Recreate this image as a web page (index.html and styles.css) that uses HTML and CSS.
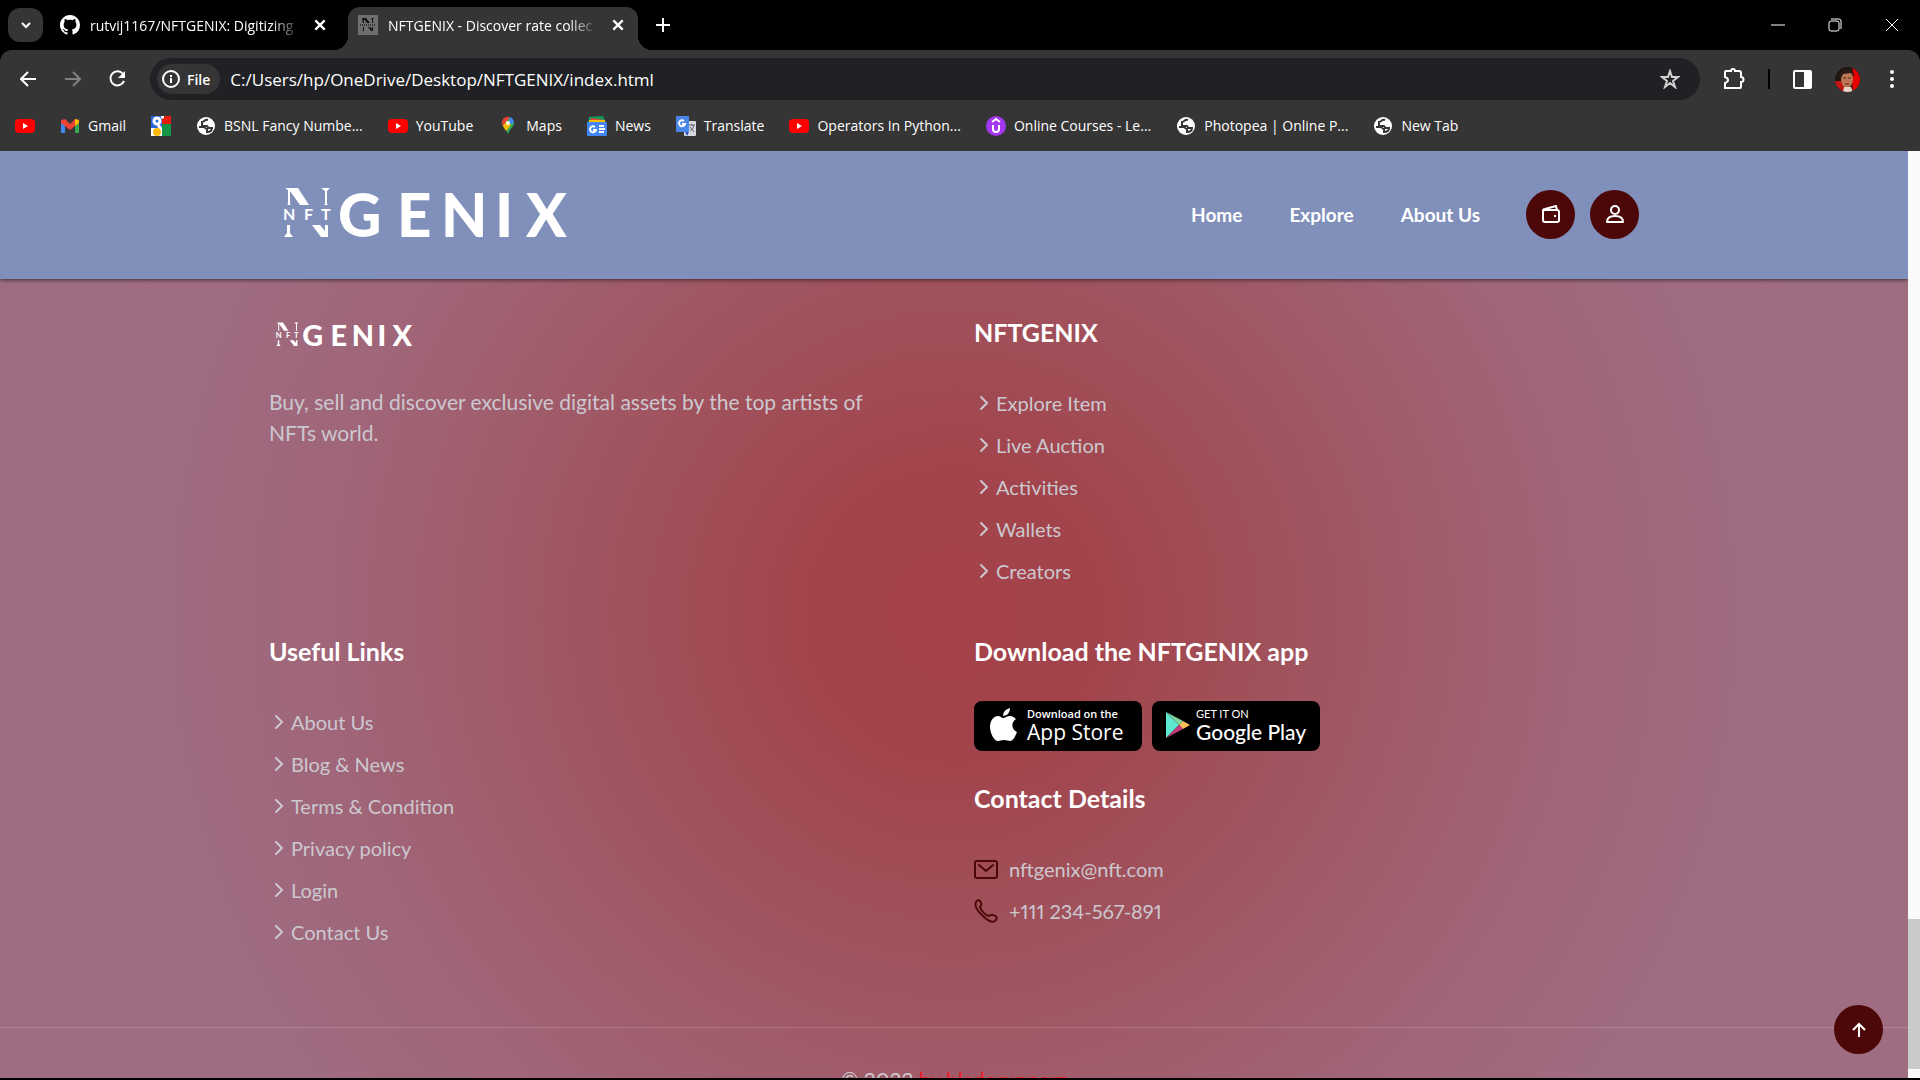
FILE: index.html
```html
<!DOCTYPE html>
<html lang="en">
<head>
    <meta charset="UTF-8">
    <meta name="viewport" content="width=device-width, initial-scale=1.0">
    <title>NFTGENIX - Discover rate collections</title>
    <link rel="stylesheet" href="styles.css">
</head>
<body>
    <!-- Shared icons -->
    <svg class="sprite" aria-hidden="true">
        <symbol id="youtube" viewBox="0 0 20 20">
            <rect y="3" width="20" height="14" rx="4" fill="#f00"/>
            <path d="M8 7l5 3-5 3z" fill="#fff"/>
        </symbol>
        <symbol id="globe" viewBox="0 0 20 20">
            <circle cx="10" cy="10" r="9" fill="#fff"/>
            <path d="M12 4c-4-1-3 2-6 2v4h5c1 0 0 2 2 2h3c0 3-2 4-5 4v-3c-2 0-2-2-3-2H3" fill="none" stroke="#353535" stroke-width="2"/>
        </symbol>
        <symbol id="close" viewBox="0 0 12 12">
            <path d="M2 2l8 8M10 2l-8 8" fill="none" stroke="#fff" stroke-width="2"/>
        </symbol>
        <symbol id="chevron" viewBox="0 0 22 22">
            <path d="M7 5l6 6-6 6" fill="none" stroke="currentColor" stroke-width="2" stroke-linecap="round" stroke-linejoin="round"/>
        </symbol>
        <symbol id="logo" viewBox="0 0 284 50">
            <g fill="#fff">
                <path d="M2 1h13l11 17h-9L7 4v13l1 1H4l1-1V3zM38 1h9l-3 3v13l1 1h-4l1-1V4zM4 38h3v8l3 4H1l3-4zM29 38h8l5 6v-6h3v12h-7z"/>
                <text class="logo-nft" x="0 21 38" y="33">NFT</text>
                <text class="logo-name" x="55 114 158 212 243" y="50">GENIX</text>
            </g>
        </symbol>
    </svg>

    <div class="tab-strip">
        <button class="tab-search" aria-label="Search tabs">
            <svg width="12" height="12" viewBox="0 0 12 12"><path d="M2 4l4 4 4-4" fill="none" stroke="#fff" stroke-width="2"/></svg>
        </button>
        <div class="tab">
            <svg width="20" height="20" viewBox="0 0 16 16"><path fill="#fff" d="M8 0C3.58 0 0 3.58 0 8c0 3.54 2.29 6.53 5.47 7.59.4.07.55-.17.55-.38 0-.19-.01-.82-.01-1.49-2.01.37-2.53-.49-2.69-.94-.09-.23-.48-.94-.82-1.13-.28-.15-.68-.52-.01-.53.63-.01 1.08.58 1.23.82.72 1.21 1.87.87 2.33.66.07-.52.28-.87.51-1.07-1.78-.2-3.64-.89-3.64-3.95 0-.87.31-1.59.82-2.15-.08-.2-.36-1.02.08-2.12 0 0 .67-.21 2.2.82.64-.18 1.32-.27 2-.27s1.36.09 2 .27c1.53-1.04 2.2-.82 2.2-.82.44 1.1.16 1.92.08 2.12.51.56.82 1.27.82 2.15 0 3.07-1.87 3.75-3.65 3.95.29.25.54.73.54 1.48 0 1.07-.01 1.93-.01 2.2 0 .21.15.46.55.38A8.01 8.01 0 0 0 16 8c0-4.42-3.58-8-8-8z"/></svg>
            <span class="tab-title">rutvij1167/NFTGENIX: Digitizing</span>
            <button class="tab-close" aria-label="Close tab"><svg width="14" height="14"><use href="#close"/></svg></button>
        </div>
        <div class="tab active">
            <svg width="20" height="20" viewBox="0 0 20 20"><rect width="20" height="20" fill="#6f6f6f"/><path d="M4 3h4l4 5H9L6 4v4H5zM13 3h3l-1 1v4h-1V4zM5 12h1v4H4l1-1zM10 12h2l2 2v-2h1v4h-2z" fill="#111"/><path d="M2 10h16" stroke="#333" stroke-width="2" stroke-dasharray="1 1"/></svg>
            <span class="tab-title">NFTGENIX - Discover rate collec</span>
            <button class="tab-close" aria-label="Close tab"><svg width="14" height="14"><use href="#close"/></svg></button>
        </div>
        <button class="new-tab" aria-label="New tab">
            <svg width="14" height="14" viewBox="0 0 14 14"><path d="M7 0v14M0 7h14" stroke="#fff" stroke-width="2"/></svg>
        </button>
        <div class="window-controls">
            <button aria-label="Minimize"><svg width="14" height="14" viewBox="0 0 14 14"><path d="M0 7h14" stroke="#fff"/></svg></button>
            <button aria-label="Restore"><svg width="14" height="14" viewBox="0 0 14 14" fill="none" stroke="#fff"><rect x="1" y="3" width="10" height="10" rx="2"/><path d="M3 1h8q2 0 2 2v8"/></svg></button>
            <button aria-label="Close"><svg width="14" height="14" viewBox="0 0 14 14"><path d="M1 1l12 12M13 1L1 13" stroke="#fff"/></svg></button>
        </div>
    </div>

    <div class="toolbar">
        <button aria-label="Back"><svg width="16" height="16" viewBox="0 0 16 16"><path d="M16 8H2M8 1L1 8l7 7" fill="none" stroke="#fff" stroke-width="2"/></svg></button>
        <button aria-label="Forward"><svg width="16" height="16" viewBox="0 0 16 16"><path d="M0 8h14M8 1l7 7-7 7" fill="none" stroke="#808080" stroke-width="2"/></svg></button>
        <button aria-label="Reload"><svg width="18" height="18" viewBox="0 0 18 18"><path d="M14 4A7 7 0 1 0 15 11" fill="none" stroke="#fff" stroke-width="2"/><path d="M16 1v7H9z" fill="#fff"/></svg></button>
        <div class="address-bar">
            <span class="file-chip">
                <svg width="18" height="18" viewBox="0 0 18 18"><circle cx="9" cy="9" r="8" fill="none" stroke="#fff" stroke-width="2"/><path d="M9 8v5M9 5v2" stroke="#fff" stroke-width="2"/></svg>
                File
            </span>
            <input type="text" aria-label="Address" value="C:/Users/hp/OneDrive/Desktop/NFTGENIX/index.html">
            <svg width="20" height="20" viewBox="0 0 20 20"><path d="M10 2l2 6h6l-5 4 2 6-5-4-5 4 2-6-5-4h6z" fill="none" stroke="#d0d0d0" stroke-width="2"/></svg>
        </div>
        <div class="toolbar-actions">
            <button aria-label="Extensions"><svg width="22" height="24" viewBox="0 0 22 24"><path d="M2 5q0-1 1-1h5a2 2 0 0 1 4 0h4q2 0 2 2v4a2 2 0 0 1 0 5v5q0 1-1 1H2v-5q3-1 3-3t-3-3z" fill="none" stroke="#fff" stroke-width="2"/></svg></button>
            <span class="divider"></span>
            <button aria-label="Side panel"><svg width="19" height="19" viewBox="0 0 19 19"><rect x="1" y="1" width="17" height="17" rx="1" fill="none" stroke="#fff" stroke-width="2"/><path d="M11 1h7v17h-7z" fill="#fff"/></svg></button>
            <button aria-label="Profile"><svg class="avatar" width="25" height="25" viewBox="0 0 25 25"><rect width="25" height="25" fill="#201611"/><path d="M18 0q-2 14 0 25h7V0z" fill="#e80000"/><path d="M0 14h7l4 11H0z" fill="#c01510"/><ellipse cx="12" cy="12" rx="6" ry="9" fill="#bd7853"/><path d="M4 9q2-7 8-7 7 0 7 8l-3-4-8 1-3 6z" fill="#2b1913"/><path d="M8 11h3M13 11h3M10 17h4" stroke="#51271b"/><path d="M9 20h7l2 5H8z" fill="#e7d2c4"/></svg></button>
            <button aria-label="Menu"><svg width="18" height="20" viewBox="0 0 18 20" fill="#fff"><circle cx="9" cy="3" r="2"/><circle cx="9" cy="10" r="2"/><circle cx="9" cy="17" r="2"/></svg></button>
        </div>
    </div>

    <nav class="bookmarks" aria-label="Bookmarks">
        <a href="#" aria-label="YouTube"><svg><use href="#youtube"/></svg></a>
        <a href="#"><svg viewBox="0 0 20 20"><path d="M1 4v13h4V9z" fill="#4285f4"/><path d="M19 4v13h-4V9z" fill="#34a853"/><path d="M1 4l4-1 5 5 5-5 4 1v3l-9 7-9-7z" fill="#ea4335"/><path d="M15 3l4 1v3l-4 3z" fill="#fbbc04"/></svg>Gmail</a>
        <a href="#" aria-label="Google"><svg viewBox="0 0 20 20"><path d="M0 0h11v12H0z" fill="#2a67db"/><path d="M11 0h9v8h-9z" fill="#e81c0c"/><path d="M11 8h9v12h-9z" fill="#149446"/><path d="M0 12h11v8H0z" fill="#fff"/><circle cx="6" cy="5" r="3" fill="none" stroke="#fff" stroke-width="3"/><path d="M10 1h3M7 9l3 4" stroke="#fff" stroke-width="3"/><circle cx="6" cy="16" r="4" fill="#fbb90c"/></svg></a>
        <a href="#"><svg><use href="#globe"/></svg>BSNL Fancy Numbe...</a>
        <a href="#"><svg><use href="#youtube"/></svg>YouTube</a>
        <a href="#"><svg viewBox="0 0 20 20"><path d="M10 1a6 6 0 0 1 6 6c0 4-5 6-6 12C9 13 4 11 4 7a6 6 0 0 1 6-6z" fill="#34a853"/><path d="M4 7a6 6 0 0 1 8-6L5 10q-1-1-1-3z" fill="#ea4335"/><path d="M12 1q4 2 4 6l-6 2z" fill="#4285f4"/><path d="M5 10l4-5 4 4-5 6z" fill="#fbbc04"/><circle cx="10" cy="7" r="2" fill="#fff"/></svg>Maps</a>
        <a href="#"><svg viewBox="0 0 20 20"><path d="M2 1l14-1 3 7H1z" fill="#0c9d58"/><path d="M4 2l14 2-1 5H3z" fill="#ea4335"/><path d="M2 4h16v5H2z" fill="#fbbc04"/><rect y="6" width="20" height="14" rx="1" fill="#4285f4"/><path d="M8 11a3 3 0 1 0 1 3H6M12 10h5M12 13h6M12 16h5" fill="none" stroke="#fff" stroke-width="2"/></svg>News</a>
        <a href="#"><svg viewBox="0 0 20 20"><rect x="8" y="5" width="12" height="15" rx="1" fill="#d5d8dc"/><rect width="13" height="16" rx="1" fill="#4a86e8"/><path d="M8 5a3 3 0 1 0 1 3H6" fill="none" stroke="#fff" stroke-width="2"/><path d="M13 9h6M16 8v2M18 9q-1 5-4 6M14 11l4 5" fill="none" stroke="#5f6b78"/><path d="M9 16h4l-2 4z" fill="#2850b8"/></svg>Translate</a>
        <a href="#"><svg><use href="#youtube"/></svg>Operators In Python...</a>
        <a href="#"><svg viewBox="0 0 20 20"><circle cx="10" cy="10" r="10" fill="#a435f0"/><path d="M6 6l4-3 4 3M7 9v4q0 3 3 3t3-3V9" fill="none" stroke="#fff" stroke-width="2"/></svg>Online Courses - Le...</a>
        <a href="#"><svg><use href="#globe"/></svg>Photopea | Online P...</a>
        <a href="#"><svg><use href="#globe"/></svg>New Tab</a>
    </nav>

    <div class="viewport">
        <div class="page">
            <header class="header">
                <div class="container">
                    <a href="#" class="logo" aria-label="NFTGENIX"><svg><use href="#logo"/></svg></a>
                    <nav class="navbar">
                        <a href="#">Home</a>
                        <a href="#">Explore</a>
                        <a href="#">About Us</a>
                    </nav>
                    <div class="header-actions">
                        <button class="round-btn" aria-label="Wallet"><svg width="20" height="20" viewBox="0 0 20 20" fill="none" stroke="#fff" stroke-width="2"><rect x="2" y="6" width="16" height="12" rx="2"/><path d="M2 7q0-2 2-2l11-3 1 4" stroke-linejoin="round"/><path d="M13 12h2"/></svg></button>
                        <button class="round-btn" aria-label="Account"><svg width="20" height="20" viewBox="0 0 20 20" fill="none" stroke="#fff" stroke-width="2" stroke-linejoin="round"><circle cx="10" cy="6" r="4"/><path d="M2 18q0-6 8-6t8 6z"/></svg></button>
                    </div>
                </div>
            </header>

            <footer class="footer">
                <div class="container footer-top">
                    <div class="footer-col">
                        <a href="#" class="footer-logo" aria-label="NFTGENIX"><svg><use href="#logo"/></svg></a>
                        <p class="footer-text">Buy, sell and discover exclusive digital assets by the top artists of NFTs world.</p>
                    </div>
                    <div class="footer-col">
                        <h2>NFTGENIX</h2>
                        <ul class="links">
                            <li><a href="#"><svg><use href="#chevron"/></svg>Explore Item</a></li>
                            <li><a href="#"><svg><use href="#chevron"/></svg>Live Auction</a></li>
                            <li><a href="#"><svg><use href="#chevron"/></svg>Activities</a></li>
                            <li><a href="#"><svg><use href="#chevron"/></svg>Wallets</a></li>
                            <li><a href="#"><svg><use href="#chevron"/></svg>Creators</a></li>
                        </ul>
                    </div>
                    <div class="footer-col">
                        <h2>Useful Links</h2>
                        <ul class="links">
                            <li><a href="#"><svg><use href="#chevron"/></svg>About Us</a></li>
                            <li><a href="#"><svg><use href="#chevron"/></svg>Blog &amp; News</a></li>
                            <li><a href="#"><svg><use href="#chevron"/></svg>Terms &amp; Condition</a></li>
                            <li><a href="#"><svg><use href="#chevron"/></svg>Privacy policy</a></li>
                            <li><a href="#"><svg><use href="#chevron"/></svg>Login</a></li>
                            <li><a href="#"><svg><use href="#chevron"/></svg>Contact Us</a></li>
                        </ul>
                    </div>
                    <div class="footer-col">
                        <h2>Download the NFTGENIX app</h2>
                        <div class="stores">
                            <a href="#" class="store app-store">
                                <svg width="28" height="34" viewBox="0 0 28 34" fill="#fff"><path d="M14 10c2 0 4-2 7-2 2 0 4 1 6 3-5 3-5 10 1 13-2 5-4 9-7 9-2 0-3-1-6-1s-4 1-6 1c-4 0-8-8-8-14 0-7 4-11 8-11 2 0 4 2 5 2z"/><path d="M14 8q0-6 7-8 0 7-7 8z"/></svg>
                                <span><small>Download on the</small><b>App Store</b></span>
                            </a>
                            <a href="#" class="store google-play">
                                <svg width="24" height="28" viewBox="0 0 24 28"><path d="M0 1v26l13-13z" fill="#5ee8d0"/><path d="M0 1l17 9-4 4z" fill="#7fd6a0"/><path d="M17 10l7 4-7 4-4-4z" fill="#fdbd58"/><path d="M0 27l13-13 4 4z" fill="#c33a7c"/></svg>
                                <span><small>GET IT ON</small><b>Google Play</b></span>
                            </a>
                        </div>
                        <h2>Contact Details</h2>
                        <ul class="contact">
                            <li><svg viewBox="0 0 24 24"><rect x="1" y="4" width="22" height="17" rx="2"/><path d="M5 8l7 6 7-6"/></svg><a href="#">nftgenix@nft.com</a></li>
                            <li><svg viewBox="0 0 24 24"><path d="M2 3c2-3 4-2 5 1 1 2 0 3-1 4 1 4 5 8 9 9 1-1 2-2 4-1 4 1 5 3 2 6-3 2-8-1-12-5C4 13 0 7 2 3z"/></svg><a href="#">+111 234-567-891</a></li>
                        </ul>
                    </div>
                </div>
                <div class="footer-bottom">
                    <p>© 2022 <a href="#">by bladerunnerz</a></p>
                </div>
            </footer>

            <a href="#" class="back-top" aria-label="Back to top"><svg width="16" height="16" viewBox="0 0 16 16"><path d="M8 15V2M2 8l6-6 6 6" fill="none" stroke="#fff" stroke-width="2"/></svg></a>
        </div>
        <div class="scrollbar"><div class="thumb"></div></div>
    </div>
</body>
</html>
```
FILE: styles.css
```css
* {
    box-sizing: border-box;
    margin: 0;
    padding: 0;
}

body {
    display: flex;
    flex-direction: column;
    height: 100vh;
    overflow: hidden;
    background-color: #000;
    color: #fff;
    font-family: "Open Sans", sans-serif;
    font-size: 14px;
}

a {
    color: inherit;
    text-decoration: none;
}

button {
    display: flex;
    align-items: center;
    justify-content: center;
    flex-shrink: 0;
    background: none;
    border: none;
    cursor: pointer;
}

svg {
    flex-shrink: 0;
}

ul {
    list-style: none;
}

.sprite {
    position: absolute;
    width: 0;
    height: 0;
}

/* Tabs */
.tab-strip {
    display: flex;
    align-items: center;
    height: 50px;
    flex-shrink: 0;
    padding-left: 8px;
}

.tab-search {
    width: 35px;
    height: 34px;
    border-radius: 12px;
    background-color: #353535;
}

.tab {
    display: flex;
    align-items: center;
    gap: 10px;
    width: 290px;
    height: 43px;
    padding: 0 12px 0 10px;
    margin-left: 7px;
}

.tab.active {
    position: relative;
    align-self: flex-end;
    margin-left: 8px;
    padding-bottom: 7px;
    background-color: #353535;
    border-radius: 12px 12px 0 0;
}

.tab.active::before,
.tab.active::after {
    content: "";
    position: absolute;
    bottom: 0;
    left: -14px;
    width: 14px;
    height: 14px;
    background: radial-gradient(circle at 0 0, transparent 14px, #353535 14px);
}

.tab.active::after {
    left: 100%;
    background: radial-gradient(circle at 100% 0, transparent 14px, #353535 14px);
}

.tab-title {
    flex: 1;
    overflow: hidden;
    white-space: nowrap;
    mask-image: linear-gradient(to right, #000 85%, transparent);
}

.tab-close {
    width: 16px;
    height: 16px;
}

.new-tab {
    width: 50px;
    height: 34px;
}

.window-controls {
    display: flex;
    margin-left: auto;
}

.window-controls button {
    width: 57px;
    height: 50px;
}

/* Toolbar */
.toolbar {
    display: flex;
    align-items: center;
    height: 58px;
    flex-shrink: 0;
    padding: 0 19px 0 5px;
    background-color: #353535;
    border-radius: 12px 12px 0 0;
}

.toolbar > button {
    width: 45px;
    height: 40px;
}

.address-bar {
    display: flex;
    align-items: center;
    flex: 1;
    gap: 10px;
    height: 42px;
    margin-left: 10px;
    padding: 0 20px 0 7px;
    background-color: #202124;
    border-radius: 21px;
}

.file-chip {
    display: flex;
    align-items: center;
    gap: 7px;
    height: 30px;
    padding: 0 10px 0 5px;
    border-radius: 15px;
    background-color: #353535;
    font-weight: 600;
}

.address-bar input {
    flex: 1;
    background: none;
    border: none;
    outline: none;
    color: #fff;
    font-family: "Open Sans", sans-serif;
    font-size: 17px;
}

.toolbar-actions {
    display: flex;
    align-items: center;
    gap: 23px;
    margin-left: 23px;
}

.divider {
    width: 2px;
    height: 20px;
    background-color: #000;
}

.avatar {
    border-radius: 50%;
}

/* Bookmarks */
.bookmarks {
    display: flex;
    align-items: center;
    gap: 25px;
    height: 43px;
    flex-shrink: 0;
    padding: 0 15px 8px;
    background-color: #353535;
}

.bookmarks a {
    display: flex;
    align-items: center;
    gap: 8px;
    white-space: nowrap;
}

.bookmarks svg {
    width: 20px;
    height: 20px;
}

/* Page area */
.viewport {
    display: flex;
    flex: 1;
    min-height: 0;
    margin-bottom: 2px;
}

.page {
    position: relative;
    flex: 1;
    overflow: hidden;
    font-family: Lato, sans-serif;
    font-size: 20px;
    font-variant-numeric: proportional-nums;
    background: radial-gradient(circle at 50% 50%, #a44148 0, #a2444c 150px, #a0525c 330px, #a05c6a 470px, #a06578 620px, #9f6b80 780px, #9f6d82 960px);
}

.scrollbar {
    display: flex;
    flex-direction: column;
    justify-content: flex-end;
    width: 12px;
    padding-bottom: 9px;
    background-color: #fafafa;
}

.thumb {
    height: 150px;
    background-color: #cacaca;
}

.container {
    max-width: 1370px;
    margin: 0 auto;
}

/* Header */
.header {
    position: relative;
    background-color: #8090ba;
    box-shadow: 0 1px 4px rgba(0, 0, 0, 0.6);
}

.header .container {
    display: flex;
    align-items: center;
    height: 128px;
    padding-bottom: 2px;
}

.logo svg {
    display: block;
    width: 284px;
    height: 50px;
    margin: 0 0 4px 14px;
}

.logo-name {
    font-family: Lato, sans-serif;
    font-size: 60px;
    font-weight: 900;
}

.logo-nft {
    font-family: Lato, sans-serif;
    font-size: 16px;
    font-weight: 700;
}

.navbar {
    display: flex;
    gap: 47px;
    margin-left: auto;
    font-size: 19px;
    font-weight: 700;
}

.header-actions {
    display: flex;
    gap: 15px;
    margin-left: 46px;
}

.round-btn {
    width: 49px;
    height: 49px;
    border-radius: 50%;
    background-color: #4c0808;
}

/* Footer */
.footer {
    color: #ccc8d0;
}

.footer-top {
    display: grid;
    grid-template-columns: 1fr 1fr;
    column-gap: 40px;
    row-gap: 42px;
    padding: 36px 0 74px;
}

.footer h2 {
    margin-bottom: 33px;
    color: #fff;
    font-size: 25px;
    line-height: 34px;
}

.footer-logo svg {
    display: block;
    width: 138px;
    height: 24px;
    margin: 7px 0 40px 6px;
}

.footer-text {
    max-width: 620px;
    font-size: 21px;
    line-height: 31px;
}

.links li,
.contact li {
    display: flex;
    align-items: center;
    height: 42px;
}

.links a {
    display: flex;
    align-items: center;
}

.links svg {
    width: 22px;
    height: 22px;
}

.stores {
    display: flex;
    gap: 10px;
    margin-bottom: 30px;
}

.store {
    display: flex;
    align-items: center;
    gap: 10px;
    width: 168px;
    height: 50px;
    padding: 0 0 2px 15px;
    border-radius: 8px;
    background-color: #000;
    color: #fff;
}

.store small,
.store b {
    display: block;
    white-space: nowrap;
}

.store small {
    font-size: 11px;
    line-height: 14px;
}

.store b {
    font-size: 21px;
    line-height: 22px;
    font-weight: 500;
}

.app-store {
    font-family: "Open Sans", sans-serif;
}

.app-store small {
    font-weight: 600;
}

.google-play {
    gap: 6px;
    padding-left: 14px;
}

.contact li {
    gap: 11px;
}

.contact svg {
    width: 24px;
    height: 24px;
    fill: none;
    stroke: #4c0808;
    stroke-width: 2;
    stroke-linejoin: round;
    stroke-linecap: round;
}

.footer-bottom {
    padding: 36px 0;
    border-top: 1px solid rgba(255, 255, 255, 0.15);
    text-align: center;
    font-size: 21px;
    line-height: 31px;
}

.footer-bottom a {
    color: #f01c28;
}

.back-top {
    position: absolute;
    right: 25px;
    bottom: 24px;
    display: flex;
    align-items: center;
    justify-content: center;
    width: 49px;
    height: 49px;
    border-radius: 50%;
    background-color: #4c0808;
}
```
